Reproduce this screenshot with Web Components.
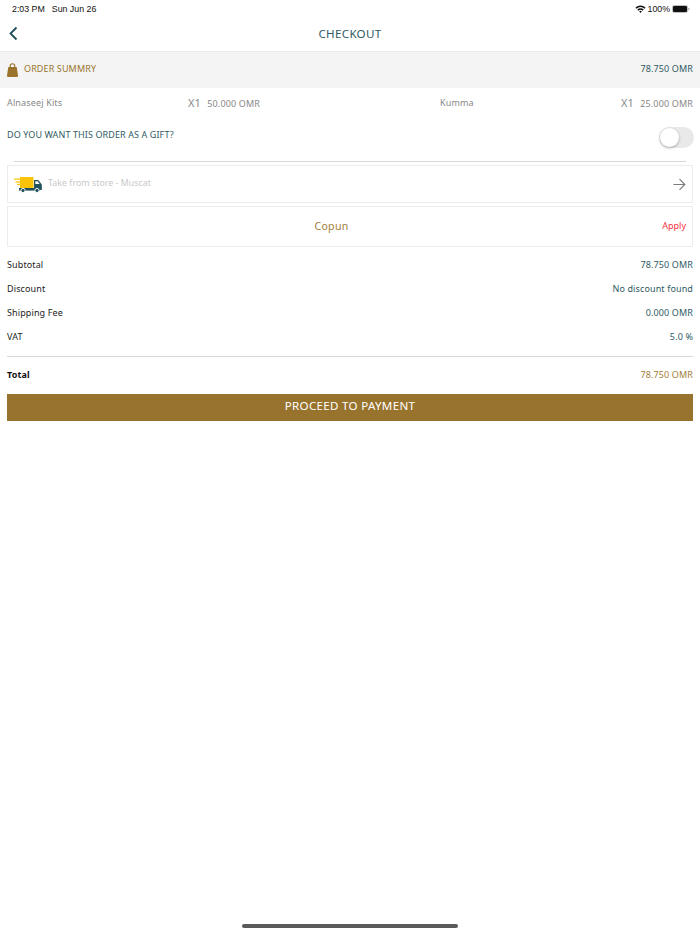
<!DOCTYPE html>
<html lang="en"><head><meta charset="utf-8"><title>Checkout</title>
<style>
html,body{margin:0;padding:0;background:#fff;height:934px;overflow:hidden}
body{font-family:"Noto Sans","Open Sans",sans-serif;font-size:9px;display:flex;flex-direction:column;height:934px}
home-bar{margin-top:auto}
</style></head><body>
<status-bar></status-bar>
<nav-header>CHECKOUT</nav-header>
<summary-band></summary-band>
<order-items></order-items>
<gift-row></gift-row>
<delivery-box></delivery-box>
<coupon-box></coupon-box>
<totals-list></totals-list>
<pay-button>PROCEED TO PAYMENT</pay-button>
<home-bar></home-bar>
<script>
function def(name, html){
  customElements.define(name, class extends HTMLElement{
    constructor(){super();this.attachShadow({mode:"open"}).innerHTML=html;}
  });
}
def("status-bar",`<style>
:host{display:flex;height:17px;padding:0 10px 0 12px;align-items:center;justify-content:space-between;font:8.8px "Liberation Sans",sans-serif;color:#111}
.l{display:flex;gap:7px}.r{display:flex;align-items:center;gap:2px}
svg{display:block}
</style><div class="l"><span>2:03 PM</span><span>Sun Jun 26</span></div>
<div class="r"><svg width="11" height="8" viewBox="0 0 11 8"><path d="M.4 2.7A7.2 7.2 0 0 1 10.6 2.7L9.5 3.8A5.6 5.6 0 0 0 1.5 3.8Z M2.3 4.6A4.5 4.5 0 0 1 8.7 4.6L7.6 5.7A3 3 0 0 0 3.4 5.7Z M4.2 6.5A1.8 1.8 0 0 1 6.8 6.5L5.5 7.9Z" fill="#111"/></svg>
<span>100%</span>
<svg width="18" height="8" viewBox="0 0 18 8"><rect x=".4" y=".4" width="15.2" height="7.2" rx="1.8" fill="#fff" stroke="#999" stroke-width=".7"/><rect x="1" y="1" width="14" height="6" rx="1.2" fill="#111"/><path d="M16.4 2.8c.8.2 1.1.7 1.1 1.2s-.3 1-1.1 1.2Z" fill="#999"/></svg></div>`);
def("nav-header",`<style>
:host{display:flex;height:35px;align-items:center;justify-content:center;position:relative;color:#2f5a62;font-size:11.6px;letter-spacing:.3px;border-bottom:1px solid #ececec;box-sizing:border-box;padding-bottom:1px}
svg{position:absolute;left:8px;top:9px}
</style><svg width="11" height="15" viewBox="0 0 11 15"><path d="M8.5 1.5 2.5 7.5l6 6" fill="none" stroke="#1f4d58" stroke-width="1.8"/></svg><slot></slot>`);
def("summary-band",`<style>
:host{display:flex;height:36px;background:#f4f4f4;padding:0 7px;justify-content:space-between;font-size:9px;letter-spacing:.12px;position:relative}
.a{color:#9a742c;display:flex;gap:6px;align-items:flex-start}
.a span{margin-top:10px}
svg{margin-top:11px}
.b{color:#2f5a62;margin-top:10px}
</style><div class="a"><svg width="11" height="14" viewBox="0 0 11 14"><path d="M3.2 4.2V3a2.3 2.3 0 0 1 4.6 0v1.2" fill="none" stroke="#9a742c" stroke-width="1.1"/><path d="M1.3 4H9.7L11 12.6A1.2 1.2 0 0 1 9.8 14H1.2A1.2 1.2 0 0 1 0 12.6Z" fill="#9a742c"/></svg><span>ORDER SUMMRY</span></div><div class="b">78.750 OMR</div>`);
def("order-items",`<style>
:host{display:grid;grid-template-columns:181px 252px 181px 72px;height:29px;padding:0 7px 1px;box-sizing:border-box;align-items:center;color:#888;font-size:9px;letter-spacing:.15px}
.q{display:flex;align-items:baseline;justify-content:flex-end;gap:6.5px;white-space:nowrap}
.x{font-size:11px;letter-spacing:0;color:#8a8a8a}
</style><span>Alnaseej Kits</span><span class="q" style="justify-content:flex-start"><span class="x">X1</span><span>50.000 OMR</span></span><span>Kumma</span><span class="q"><span class="x">X1</span><span>25.000 OMR</span></span>`);
def("gift-row",`<style>
:host{display:block;padding:0 7px;height:48px;box-sizing:border-box;position:relative;color:#2f5a62;font-size:9px;letter-spacing:.1px}
.row{display:flex;justify-content:space-between;align-items:center;height:39px}
.t{margin-bottom:5px}
.tog{width:35px;height:21px;border-radius:11px;background:#e9e9ea;position:relative;margin-right:-1px;margin-top:1px}
.k{position:absolute;left:1px;top:1px;width:19px;height:19px;border-radius:50%;background:#fff;box-shadow:0 1px 3px rgba(0,0,0,.3)}
.hr{height:1px;background:#d8d8d8;margin:5px 0 0 7px;width:672px}
</style><div class="row"><span class="t">DO YOU WANT THIS ORDER AS A GIFT?</span><div class="tog"><div class="k"></div></div></div><div class="hr"></div>`);
def("delivery-box",`<style>
:host{display:flex;height:38px;box-sizing:border-box;margin:0 7px;border:1px solid #ececec;align-items:center;color:#c8c8c8;font-size:8.8px;letter-spacing:.05px;padding:0 6px;gap:6px}
span{flex:1;margin-top:-3px}svg{display:block}
</style><svg width="28" height="17" viewBox="0 0 28 17"><rect x="6" y="1" width="13.5" height="11.5" fill="#fcc30b"/><path d="M0 3.2h6M1.5 5.8h4.5M3 8.4h3" stroke="#fcc30b" stroke-width="1.2"/><path d="M20 4h4.2l3.6 4.5V14H20Z" fill="#23515c"/><path d="M21.3 5.300h2.300l2 2.700h-4.300Z" fill="#fff"/><rect x="5" y="12" width="21" height="2.6" fill="#23515c"/><circle cx="9" cy="14.5" r="2.1" fill="#23515c" stroke="#fff" stroke-width=".9"/><circle cx="23" cy="14.5" r="2.1" fill="#23515c" stroke="#fff" stroke-width=".9"/></svg><span>Take from store - Muscat</span><svg width="13" height="13" viewBox="0 0 13 13"><path d="M.5 6.5h11M6.5 1.2l5.3 5.3-5.3 5.3" fill="none" stroke="#7d7d7d" stroke-width="1.2"/></svg>`);
def("coupon-box",`<style>
:host{display:grid;grid-template-columns:1fr auto;height:41px;box-sizing:border-box;margin:3px 7px 0;border:1px solid #ececec;align-items:center;padding:0 6px 2px 0}
.c{color:#a27e3a;font-size:10.6px;letter-spacing:.25px;text-align:center;grid-column:1 / 3;grid-row:1;padding-right:31px}
.a{color:#f5333f;font-size:9px;grid-column:2;grid-row:1;justify-self:end}
</style><span class="c">Copun</span><span class="a">Apply</span>`);
def("totals-list",`<style>
:host{display:block;padding:5px 7px 0;font-size:9px;letter-spacing:.12px;color:#222}
.r{display:flex;justify-content:space-between;align-items:center;height:24px}
.v{color:#2f5a62}
.hr{height:1px;background:#d8d8d8;margin:8px 0 5px}
.t{font-weight:700;color:#111;height:25px}
.t .v{font-weight:400;color:#a27e3a}
</style><div class="r"><span>Subtotal</span><span class="v">78.750 OMR</span></div>
<div class="r"><span>Discount</span><span class="v">No discount found</span></div>
<div class="r"><span>Shipping Fee</span><span class="v">0.000 OMR</span></div>
<div class="r"><span>VAT</span><span class="v">5.0 %</span></div>
<div class="hr"></div>
<div class="r t"><span>Total</span><span class="v">78.750 OMR</span></div>`);
def("pay-button",`<style>
:host{display:block;height:27px;margin:7px 7px 0;background:#98732d;color:#fff;text-align:center;font-size:11.6px;letter-spacing:.3px;line-height:23px}
</style><slot></slot>`);
def("home-bar",`<style>
:host{display:block;height:10px;flex:none}
div{width:216px;height:4px;border-radius:2px;margin:0 auto;background:#5a5a5a}
</style><div></div>`);
</script>
</body></html>
